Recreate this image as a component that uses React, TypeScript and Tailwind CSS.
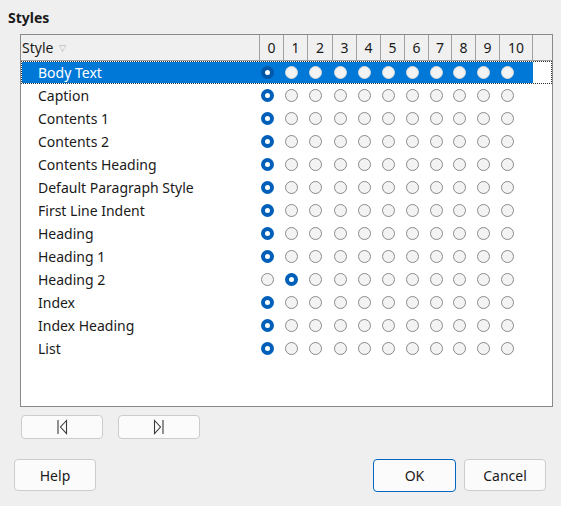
import React from "react";

const rows: { name: string; level: number }[] = [
  { name: "Body Text", level: 0 },
  { name: "Caption", level: 0 },
  { name: "Contents 1", level: 0 },
  { name: "Contents 2", level: 0 },
  { name: "Contents Heading", level: 0 },
  { name: "Default Paragraph Style", level: 0 },
  { name: "First Line Indent", level: 0 },
  { name: "Heading", level: 0 },
  { name: "Heading 1", level: 0 },
  { name: "Heading 2", level: 1 },
  { name: "Index", level: 0 },
  { name: "Index Heading", level: 0 },
  { name: "List", level: 0 },
];

const colWidths = [24, 24, 25, 24, 24, 24, 24, 23, 24, 24, 33];

const Radio = ({ on, inSelected }: { on: boolean; inSelected: boolean }) => {
  if (on) {
    return (
      <span
        className={`flex w-[13px] h-[13px] rounded-full items-center justify-center ${
          inSelected ? "bg-[#0057a8]" : "bg-[#005fb8]"
        }`}
      >
        <span className="block w-[5px] h-[5px] rounded-full bg-white" />
      </span>
    );
  }
  return (
    <span
      className={`block w-[13px] h-[13px] rounded-full ${
        inSelected
          ? "bg-[#f3f3f3] border border-[#d8d8d8]"
          : "bg-[#f3f3f3] border border-[#8a8a8a]"
      }`}
    />
  );
};

const FirstIcon = () => (
  <svg width="12" height="16" viewBox="0 0 12 16" fill="none" stroke="#3a3a3a" strokeWidth="1.1">
    <path d="M2 1v14" />
    <path d="M10.5 1.5L4.5 8l6 6.5z" />
  </svg>
);

const LastIcon = () => (
  <svg width="12" height="16" viewBox="0 0 12 16" fill="none" stroke="#3a3a3a" strokeWidth="1.1">
    <path d="M10 1v14" />
    <path d="M1.5 1.5L7.5 8l-6 6.5z" />
  </svg>
);

export default function App() {
  return (
    <div
      className="w-[561px] h-[506px] bg-[#efefef] text-[14px] text-[#1a1a1a] relative"
      style={{ fontFamily: '"Noto Sans", "Open Sans", sans-serif' }}
    >
      <div className="pt-[8px] pl-[8px] font-bold leading-[20px]">Styles</div>

      {/* Table */}
      <div className="ml-[20px] mt-[6px] w-[533px] h-[373px] border border-[#8a8a8a] bg-white flex flex-col">
        {/* Header */}
        <div className="flex h-[26px] bg-[#f0f0f0] border-b border-[#a0a0a0] shrink-0">
          <div className="w-[239px] border-r border-[#a0a0a0] flex items-center pl-[1px] gap-[6px]">
            <span>Style</span>
            <span className="text-[9px] text-[#b0b0b0]">▽</span>
          </div>
          {colWidths.map((w, i) => (
            <div
              key={i}
              className="border-r border-[#a0a0a0] flex items-center justify-center"
              style={{ width: w }}
            >
              {i}
            </div>
          ))}
          <div className="flex-1" />
        </div>

        {/* Rows */}
        {rows.map((r, ri) => {
          const sel = ri === 0;
          return (
            <div
              key={r.name}
              className={`flex h-[23px] shrink-0 ${
                sel ? "border border-dotted border-[#333]" : "border border-transparent"
              }`}
            >
              <div className={`flex ${sel ? "bg-[#0078d7] text-white" : ""}`}>
                <div className="w-[238px] flex items-center pl-[16px]">{r.name}</div>
                {colWidths.map((w, i) => (
                  <div
                    key={i}
                    className="flex items-center pl-[1px]"
                    style={{ width: w }}
                  >
                    <Radio on={r.level === i} inSelected={sel} />
                  </div>
                ))}
              </div>
              <div className="flex-1" />
            </div>
          );
        })}
      </div>

      {/* Nav buttons */}
      <div className="flex gap-[15px] ml-[21px] mt-[8px]">
        <button className="w-[82px] h-[24px] rounded-[4px] border border-[#cccccc] bg-[#fbfbfb] flex items-center justify-center">
          <FirstIcon />
        </button>
        <button className="w-[82px] h-[24px] rounded-[4px] border border-[#cccccc] bg-[#fbfbfb] flex items-center justify-center">
          <LastIcon />
        </button>
      </div>

      {/* Bottom buttons */}
      <div className="flex mt-[20px] px-[14px] pr-[15px]">
        <button className="w-[82px] h-[32px] rounded-[4px] border border-[#cccccc] bg-[#fbfbfb]">
          Help
        </button>
        <div className="flex-1" />
        <button className="w-[83px] h-[33px] rounded-[4px] border border-[#0067c0] bg-[#fbfbfb]">
          OK
        </button>
        <button className="ml-[8px] w-[82px] h-[32px] rounded-[4px] border border-[#cccccc] bg-[#fbfbfb]">
          Cancel
        </button>
      </div>
    </div>
  );
}
